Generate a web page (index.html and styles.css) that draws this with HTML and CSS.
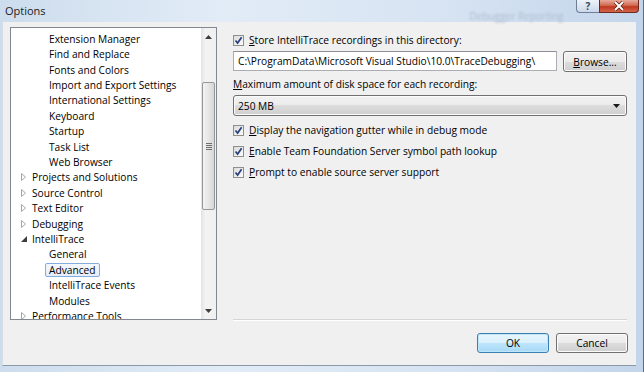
FILE: index.html
```html
<!DOCTYPE html>
<html lang="en">
<head>
    <meta charset="UTF-8">
    <meta name="viewport" content="width=device-width, initial-scale=1.0">
    <title>Options</title>
    <link rel="stylesheet" href="styles.css">
</head>
<body>

    <div id="options-window">
        <div class="titlebar">
            <span class="title">Options</span>
            <span class="behind">Debugger Reporting</span>
            <div class="caption-buttons">
                <div class="cap-btn help">?</div>
                <div class="cap-btn close">
                    <svg width="12" height="10" viewBox="0 0 12 10"><path d="M2 1 L10 9 M10 1 L2 9" stroke="#5a1a10" stroke-width="3.4"/><path d="M2 1 L10 9 M10 1 L2 9" stroke="#fff" stroke-width="2"/></svg>
                </div>
            </div>
        </div>

        <div class="client">
            <div class="main">
                <div class="tree">
                    <ul class="tree-list">
                        <li class="row child"><span class="label">Extension Manager</span></li>
                        <li class="row child"><span class="label">Find and Replace</span></li>
                        <li class="row child"><span class="label">Fonts and Colors</span></li>
                        <li class="row child"><span class="label">Import and Export Settings</span></li>
                        <li class="row child"><span class="label">International Settings</span></li>
                        <li class="row child"><span class="label">Keyboard</span></li>
                        <li class="row child"><span class="label">Startup</span></li>
                        <li class="row child"><span class="label">Task List</span></li>
                        <li class="row child"><span class="label">Web Browser</span></li>
                        <li class="row"><span class="exp"><svg width="5" height="8" viewBox="0 0 5 8"><path d="M0.5 0.5 L4.5 4 L0.5 7.5 Z" fill="#fff" stroke="#a6a6a6"/></svg></span>Projects and Solutions</li>
                        <li class="row"><span class="exp"><svg width="5" height="8" viewBox="0 0 5 8"><path d="M0.5 0.5 L4.5 4 L0.5 7.5 Z" fill="#fff" stroke="#a6a6a6"/></svg></span>Source Control</li>
                        <li class="row"><span class="exp"><svg width="5" height="8" viewBox="0 0 5 8"><path d="M0.5 0.5 L4.5 4 L0.5 7.5 Z" fill="#fff" stroke="#a6a6a6"/></svg></span>Text Editor</li>
                        <li class="row"><span class="exp"><svg width="5" height="8" viewBox="0 0 5 8"><path d="M0.5 0.5 L4.5 4 L0.5 7.5 Z" fill="#fff" stroke="#a6a6a6"/></svg></span>Debugging</li>
                        <li class="row"><span class="exp"><svg width="6" height="6" viewBox="0 0 6 6"><path d="M6 0 L6 6 L0 6 Z" fill="#3c3c3c"/></svg></span>IntelliTrace</li>
                        <li class="row child"><span class="label">General</span></li>
                        <li class="row child"><span class="label selected">Advanced</span></li>
                        <li class="row child"><span class="label">IntelliTrace Events</span></li>
                        <li class="row child"><span class="label">Modules</span></li>
                        <li class="row"><span class="exp"><svg width="5" height="8" viewBox="0 0 5 8"><path d="M0.5 0.5 L4.5 4 L0.5 7.5 Z" fill="#fff" stroke="#a6a6a6"/></svg></span>Performance Tools</li>
                    </ul>
                    <div class="scrollbar">
                        <div class="sb-arrow"><svg width="7" height="4" viewBox="0 0 7 4"><path d="M3.5 0 L7 4 L0 4 Z" fill="#3d3d3d"/></svg></div>
                        <div class="sb-space"></div>
                        <div class="sb-thumb">
                            <svg width="6" height="7" viewBox="0 0 6 7"><path d="M0 0.5 H6 M0 2.5 H6 M0 4.5 H6 M0 6.5 H6" stroke="#6f6f6f"/></svg>
                        </div>
                        <div class="sb-rest"></div>
                        <div class="sb-arrow"><svg width="7" height="4" viewBox="0 0 7 4"><path d="M0 0 L7 0 L3.5 4 Z" fill="#3d3d3d"/></svg></div>
                    </div>
                </div>

                <div class="panel">
                    <div class="check-row">
                        <span class="checkbox"><svg width="9" height="9" viewBox="0 0 9 9"><path d="M1.5 4.5 L3.6 7 L7.6 1.2" fill="none" stroke="#273f7c" stroke-width="1.7"/></svg></span>
                        <span><u>S</u>tore IntelliTrace recordings in this directory:</span>
                    </div>
                    <div class="path-row">
                        <div class="textbox">C:\ProgramData\Microsoft Visual Studio\10.0\TraceDebugging\</div>
                        <button class="btn browse"><u>B</u>rowse...</button>
                    </div>
                    <div class="field-label"><u>M</u>aximum amount of disk space for each recording:</div>
                    <div class="dropdown">
                        <span>250 MB</span>
                        <svg width="7" height="4" viewBox="0 0 7 4"><path d="M0 0 L7 0 L3.5 4 Z" fill="#1a1a1a"/></svg>
                    </div>
                    <div class="check-row spaced">
                        <span class="checkbox"><svg width="9" height="9" viewBox="0 0 9 9"><path d="M1.5 4.5 L3.6 7 L7.6 1.2" fill="none" stroke="#273f7c" stroke-width="1.7"/></svg></span>
                        <span><u>D</u>isplay the navigation gutter while in debug mode</span>
                    </div>
                    <div class="check-row">
                        <span class="checkbox"><svg width="9" height="9" viewBox="0 0 9 9"><path d="M1.5 4.5 L3.6 7 L7.6 1.2" fill="none" stroke="#273f7c" stroke-width="1.7"/></svg></span>
                        <span><u>E</u>nable Team Foundation Server symbol path lookup</span>
                    </div>
                    <div class="check-row">
                        <span class="checkbox"><svg width="9" height="9" viewBox="0 0 9 9"><path d="M1.5 4.5 L3.6 7 L7.6 1.2" fill="none" stroke="#273f7c" stroke-width="1.7"/></svg></span>
                        <span><u>P</u>rompt to enable source server support</span>
                    </div>
                    <div class="separator"></div>
                </div>
            </div>

            <div class="buttons">
                <button class="btn default">OK</button>
                <button class="btn">Cancel</button>
            </div>
        </div>
    </div>

</body>
</html>
```

FILE: styles.css
```css
body {
    margin: 0;
    width: 644px;
    height: 372px;
    overflow: hidden;
    background: #b7cbe3;
    font-family: "Open Sans", "Noto Sans", sans-serif;
    font-size: 10.2px;
    color: #000;
}
#options-window {
    height: 372px;
    display: flex;
    flex-direction: column;
    background: linear-gradient(to right, #cddded, #e2ecf7 35%, #d6e3f2 70%, #c3d5eb);
    border-right: 1px solid #5d6b7c;
    box-sizing: border-box;
}
.titlebar {
    height: 22px;
    display: flex;
    align-items: flex-start;
    flex-shrink: 0;
}
.title {
    padding: 3px 0 0 5px;
    font-size: 11px;
    color: #1b1b1b;
}
.behind {
    margin: 9px 0 0 424px;
    color: #aebdd0;
    font-size: 10px;
    filter: blur(1.3px);
    white-space: nowrap;
}
.caption-buttons {
    margin-left: auto;
    margin-right: 4px;
    display: flex;
}
.cap-btn {
    height: 13px;
    box-sizing: border-box;
    display: flex;
    align-items: center;
    justify-content: center;
}
.help {
    width: 23px;
    border: 1px solid #6e7f95;
    border-top: none;
    border-right: none;
    border-radius: 0 0 0 4px;
    background: linear-gradient(#eef3fa, #cbd8e9);
    color: #38465a;
    font-size: 10px;
    font-weight: bold;
    line-height: 12px;
}
.close {
    width: 40px;
    border: 1px solid #6a2a20;
    border-top: none;
    border-radius: 0 0 4px 0;
    background: linear-gradient(#e9aa9b, #d06a52 45%, #c0391f 55%, #d5634a);
}
.client {
    flex: 1;
    margin: 0 7px 6px 2px;
    background: #f0f0f0;
    border-left: 1px solid #d6dde6;
    border-bottom: 1px solid #8b98a8;
    display: flex;
    flex-direction: column;
    padding: 5px 8px 0 7px;
}
.main {
    display: flex;
    height: 293px;
}
.tree {
    width: 207px;
    box-sizing: border-box;
    border: 1px solid #828790;
    background: #fff;
    display: flex;
    overflow: hidden;
}
.tree-list {
    list-style: none;
    margin: 0;
    padding: 3.2px 0 0 0;
    flex: 1;
}
.row {
    height: 15.4px;
    display: flex;
    align-items: center;
    white-space: nowrap;
}
.child {
    padding-left: 34px;
}
.label {
    padding: 0 3px;
    border: 1px solid transparent;
    line-height: 12px;
    border-radius: 2px;
}
.selected {
    border-color: #84acdd;
    background: linear-gradient(#f4f8fd, #e4eefa);
}
.exp {
    width: 21px;
    padding-left: 10px;
    box-sizing: border-box;
    display: flex;
    align-items: center;
}
.scrollbar {
    width: 15px;
    background: linear-gradient(to right, #e3e3e3, #f3f3f3 30%, #f0f0f0);
    display: flex;
    flex-direction: column;
    align-items: center;
}
.sb-arrow {
    height: 17px;
    display: flex;
    align-items: center;
    justify-content: center;
}
.sb-space {
    height: 37px;
}
.sb-thumb {
    width: 13px;
    height: 128px;
    box-sizing: border-box;
    border: 1px solid #979797;
    border-radius: 2px;
    background: linear-gradient(to right, #f3f3f3, #e6e6e6 50%, #d6d6d6);
    display: flex;
    align-items: center;
    justify-content: center;
}
.sb-rest {
    flex: 1;
}
.panel {
    width: 394px;
    margin-left: 16px;
    display: flex;
    flex-direction: column;
    padding-top: 5px;
}
.check-row {
    height: 16px;
    display: flex;
    align-items: center;
    gap: 5px;
    margin-bottom: 5px;
}
.check-row.spaced {
    margin-top: 6px;
}
.checkbox {
    width: 11px;
    height: 11px;
    box-sizing: border-box;
    border: 1px solid #8f8f8f;
    background: linear-gradient(135deg, #dcdcdc, #fbfbfb);
    display: flex;
    align-items: center;
    justify-content: center;
}
.path-row {
    display: flex;
    margin-top: -2px;
    gap: 6px;
}
.textbox {
    width: 324px;
    height: 20px;
    box-sizing: border-box;
    border: 1px solid #abadb3;
    border-top-color: #8e9199;
    background: #fff;
    padding: 0 4px;
    line-height: 18px;
    white-space: nowrap;
    overflow: hidden;
}
.btn {
    font-family: inherit;
    font-size: inherit;
    color: #000;
    width: 72px;
    height: 21px;
    padding: 0;
    border: 1px solid #707070;
    border-radius: 3px;
    background: linear-gradient(#f2f2f2, #ebebeb 50%, #dddddd 50%, #cfcfcf);
    box-shadow: inset 0 0 0 1px #fcfcfc;
}
.browse {
    width: 64px;
}
.field-label {
    height: 16px;
    line-height: 16px;
    margin-top: 4px;
}
.dropdown {
    margin-top: 3px;
    height: 21px;
    box-sizing: border-box;
    border: 1px solid #707070;
    border-radius: 3px;
    background: linear-gradient(#f2f2f2, #ebebeb 50%, #dddddd 50%, #cfcfcf);
    box-shadow: inset 0 0 0 1px #fcfcfc;
    display: flex;
    align-items: center;
    justify-content: space-between;
    padding: 0 6px 0 4px;
}
.separator {
    margin-top: auto;
    border-top: 1px solid #d5d5d5;
    box-shadow: 0 1px 0 #fff;
}
.buttons {
    display: flex;
    justify-content: flex-end;
    gap: 7px;
    margin-top: 13px;
}
.buttons .btn {
    height: 20px;
}
.btn.default {
    border-color: #3c7fb1;
    background: linear-gradient(#eaf6fd, #d9f0fc 50%, #bee6fd 50%, #a7d9f5);
    box-shadow: inset 0 0 0 1px #bfe6fb;
}
```
